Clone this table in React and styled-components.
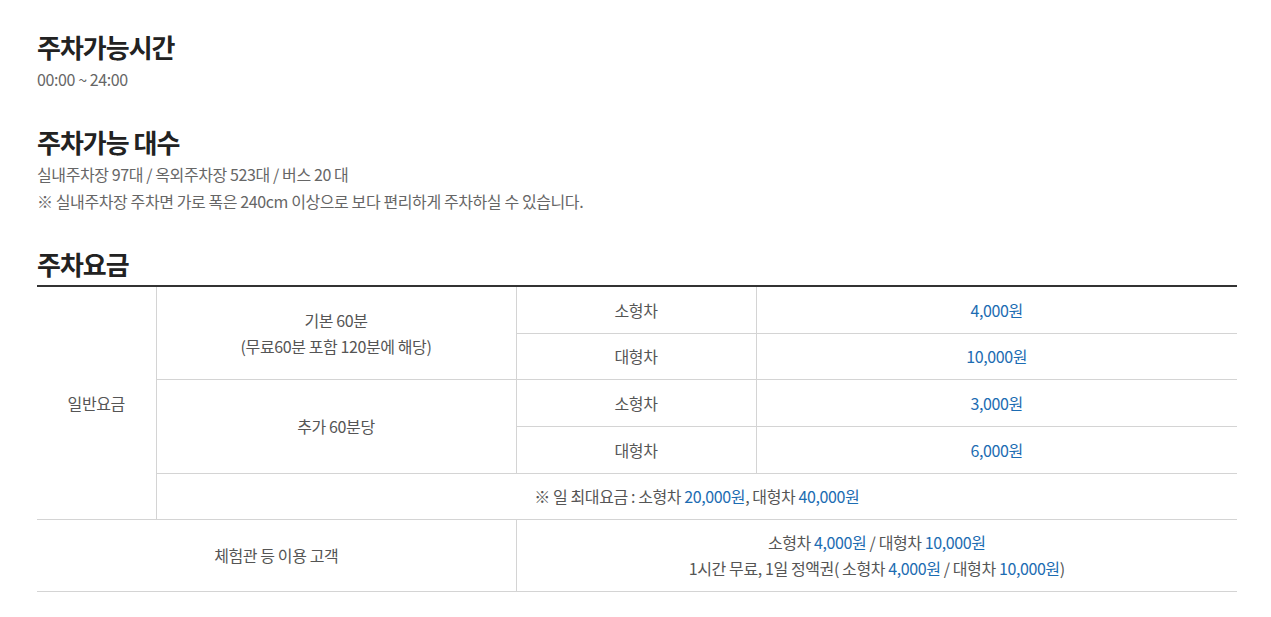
import styled, { createGlobalStyle } from "styled-components"

const GlobalStyle = createGlobalStyle`
    body {
        margin: 0;
        background: #fff;
        font-family: "Noto Sans CJK KR", "Noto Sans", sans-serif;
        color: #666;
    }
`

const Page = styled.div`
    width: 1200px;
    padding: 28px 37px 26px;
`

const Section = styled.section`
    margin-bottom: ${(p) => p.$gap || 0}px;
`

const Title = styled.h2`
    margin: 0;
    font-size: 26px;
    line-height: 38px;
    font-weight: 700;
    color: #222;
    letter-spacing: -1px;
`

const Text = styled.p`
    margin: 0;
    font-size: 16px;
    line-height: 27px;
    letter-spacing: -0.4px;
    color: #666;
`

const Table = styled.table`
    width: 100%;
    border-collapse: collapse;
    table-layout: fixed;
    border-top: 2px solid #333;
    margin-top: 2px;
`

const Row = styled.tr`
    height: ${(p) => p.$h || 46}px;
`

const Cell = styled.td`
    border-bottom: 1px solid #d4d4d4;
    border-left: ${(p) => (p.$first ? "none" : "1px solid #d4d4d4")};
    padding: 0;
    text-align: center;
    font-size: 16px;
    line-height: 26px;
    letter-spacing: -0.4px;
    color: #555;
`

const Price = styled.span`
    color: #1c6cb2;
`

const App = () => {
    return (
        <>
            <GlobalStyle />
            <Page>
                <Section $gap={30}>
                    <Title>주차가능시간</Title>
                    <Text>00:00 ~ 24:00</Text>
                </Section>
                <Section $gap={30}>
                    <Title>주차가능 대수</Title>
                    <Text>실내주차장 97대 / 옥외주차장 523대 / 버스 20 대</Text>
                    <Text>※ 실내주차장 주차면 가로 폭은 240cm 이상으로 보다 편리하게 주차하실 수 있습니다.</Text>
                </Section>
                <Section>
                    <Title>주차요금</Title>
                    <Table>
                        <colgroup>
                            <col style={{ width: 119 }} />
                            <col style={{ width: 360 }} />
                            <col style={{ width: 240 }} />
                            <col />
                        </colgroup>
                        <tbody>
                            <Row $h={47}>
                                <Cell $first rowSpan={5}>일반요금</Cell>
                                <Cell rowSpan={2}>기본 60분<br />(무료60분 포함 120분에 해당)</Cell>
                                <Cell>소형차</Cell>
                                <Cell><Price>4,000원</Price></Cell>
                            </Row>
                            <Row $h={46}>
                                <Cell>대형차</Cell>
                                <Cell><Price>10,000원</Price></Cell>
                            </Row>
                            <Row $h={47}>
                                <Cell rowSpan={2}>추가 60분당</Cell>
                                <Cell>소형차</Cell>
                                <Cell><Price>3,000원</Price></Cell>
                            </Row>
                            <Row $h={47}>
                                <Cell>대형차</Cell>
                                <Cell><Price>6,000원</Price></Cell>
                            </Row>
                            <Row $h={46}>
                                <Cell colSpan={3}>
                                    ※ 일 최대요금 : 소형차 <Price>20,000원</Price>, 대형차 <Price>40,000원</Price>
                                </Cell>
                            </Row>
                            <Row $h={72}>
                                <Cell $first colSpan={2}>체험관 등 이용 고객</Cell>
                                <Cell colSpan={2}>
                                    소형차 <Price>4,000원</Price> / 대형차 <Price>10,000원</Price><br />
                                    1시간 무료, 1일 정액권( 소형차 <Price>4,000원</Price> / 대형차 <Price>10,000원</Price>)
                                </Cell>
                            </Row>
                        </tbody>
                    </Table>
                </Section>
            </Page>
        </>
    )
}

export default App
